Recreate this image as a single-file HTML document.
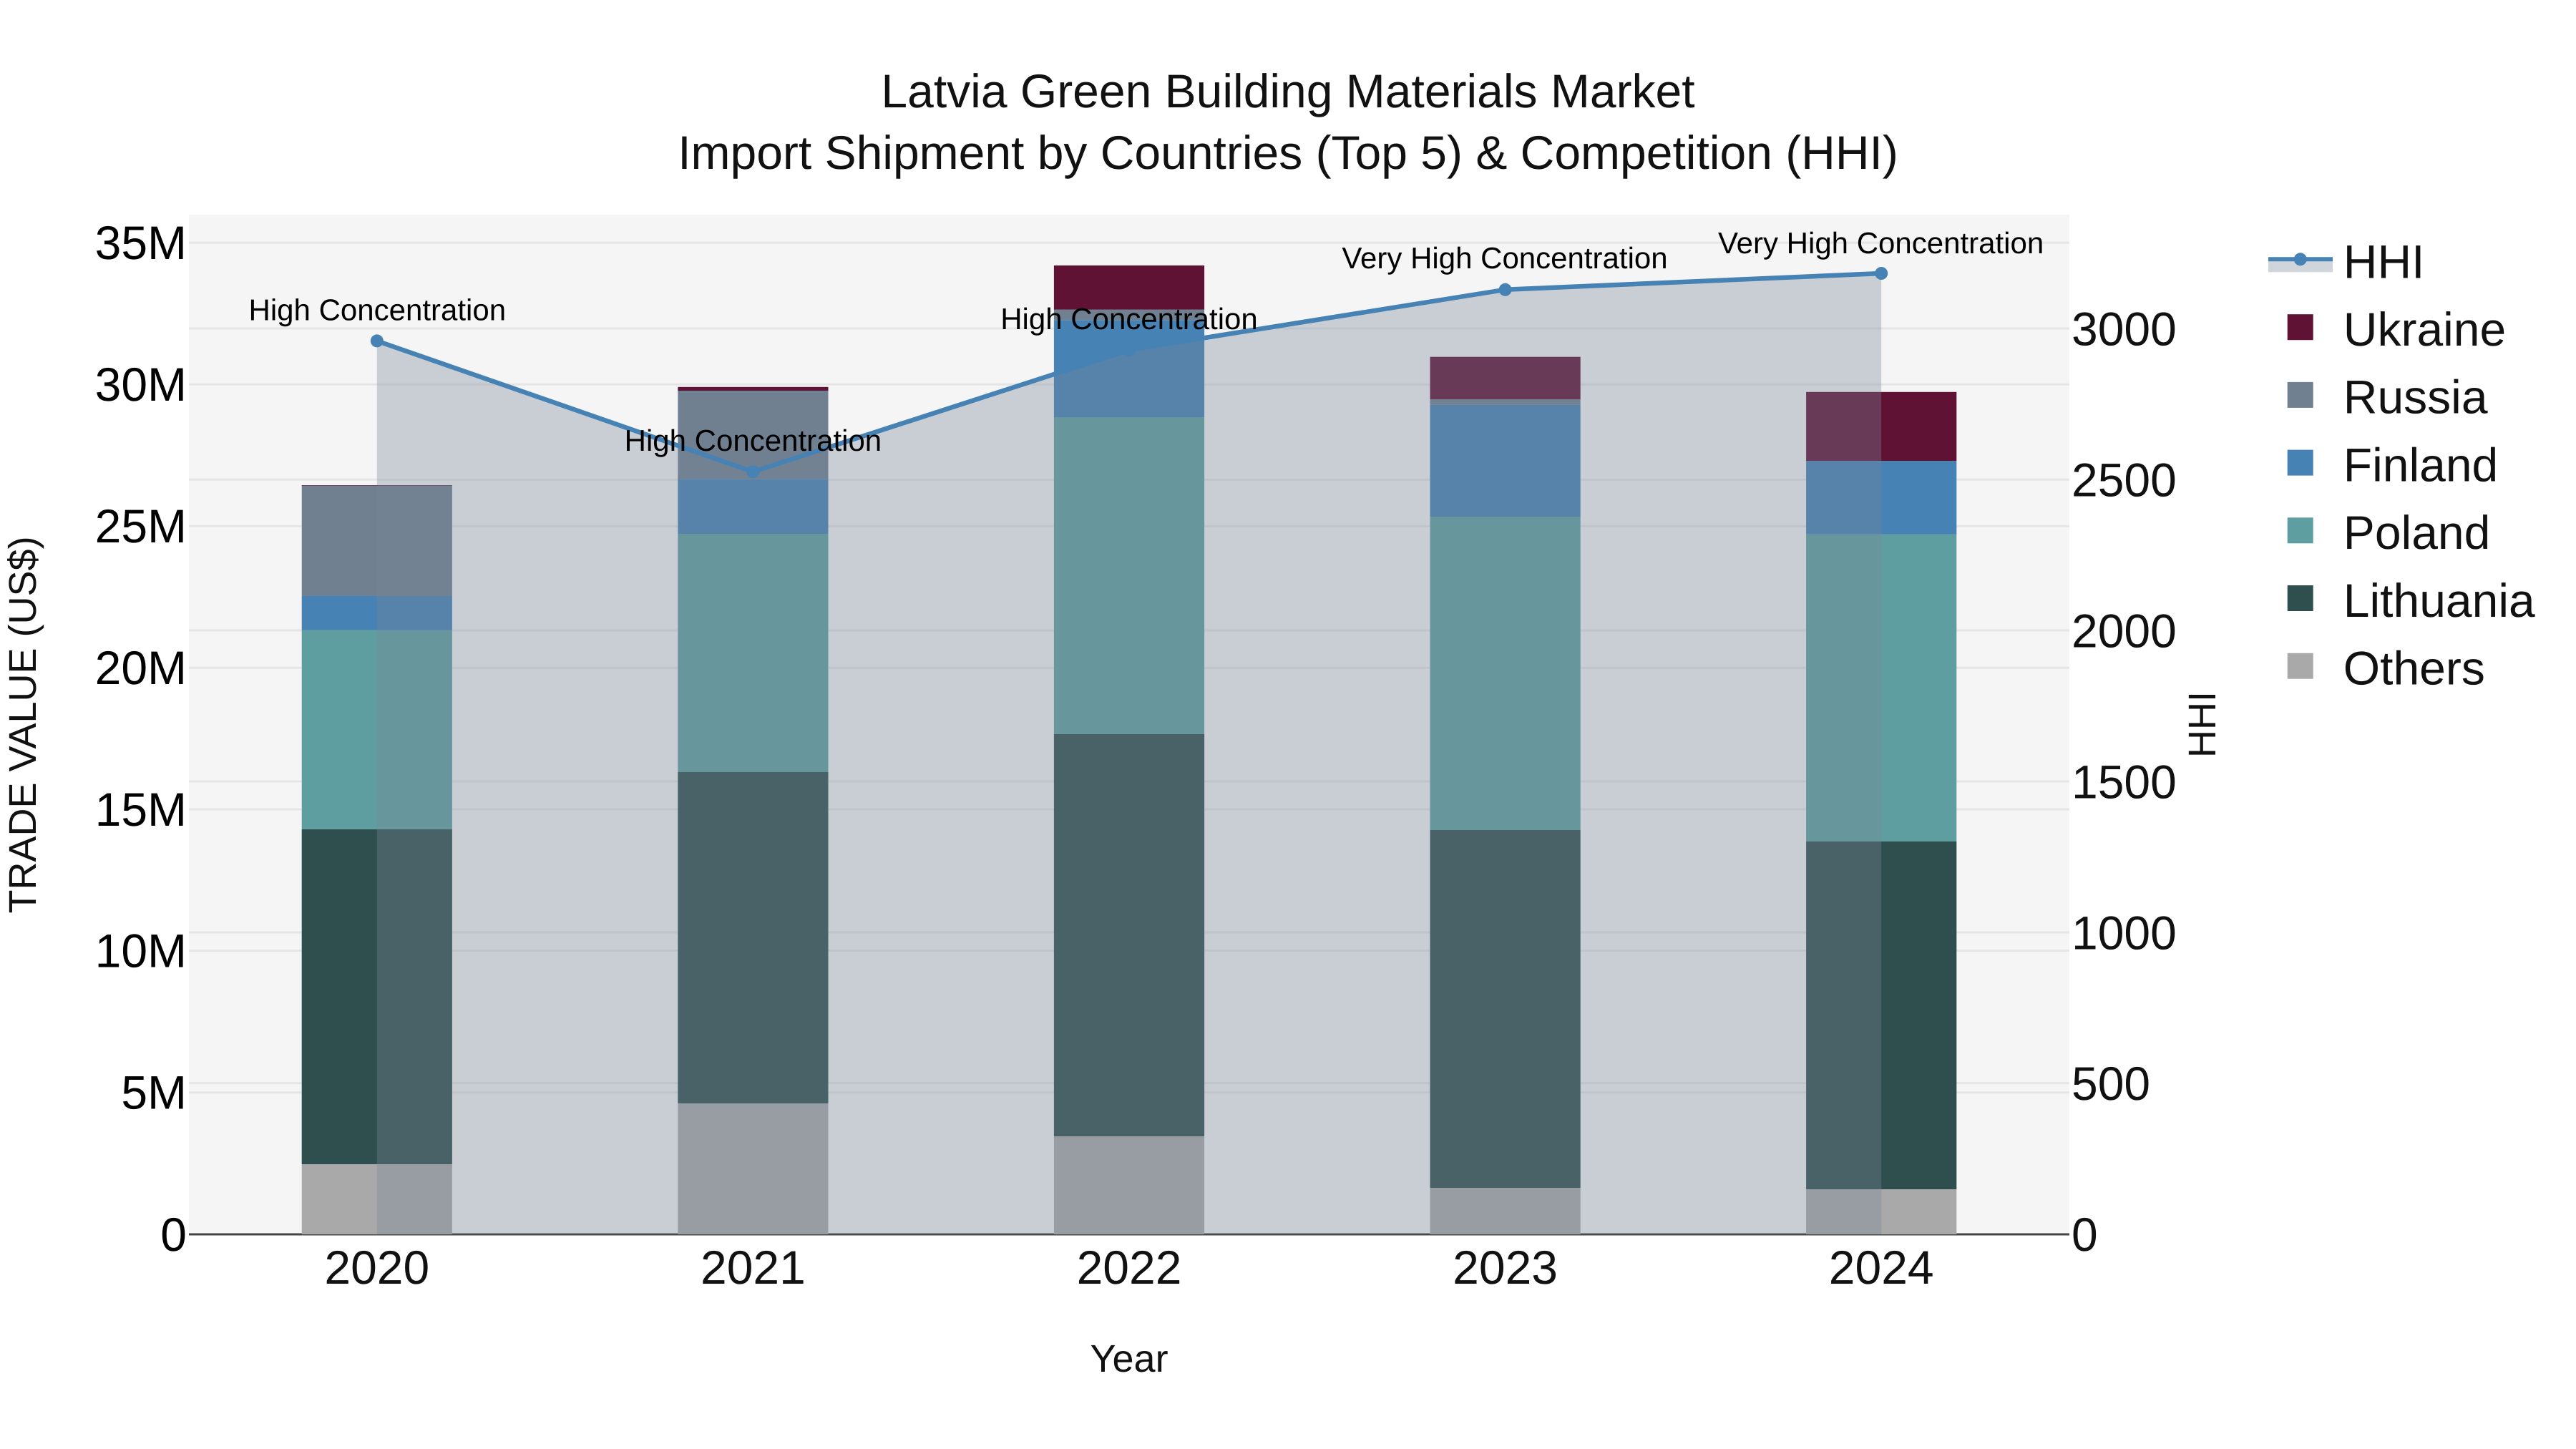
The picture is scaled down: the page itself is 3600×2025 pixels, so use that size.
<!DOCTYPE html>
<html>
<head>
<meta charset="utf-8">
<style>
html,body{margin:0;padding:0;background:#fff;width:3600px;height:2025px;overflow:hidden}
svg{display:block;font-family:"Liberation Sans",sans-serif;text-rendering:geometricPrecision}
</style>
</head>
<body>
<svg width="3600" height="2025" viewBox="0 0 3600 2025" xmlns="http://www.w3.org/2000/svg">
<rect width="3600" height="2025" fill="#fff"/>
<rect x="264" y="300" width="2628" height="1425" fill="#f5f5f5"/>
<g stroke="#e5e5e5" stroke-width="3" fill="none">
<path d="M264 339.3H2892M264 537.3H2892M264 735.3H2892M264 933.2H2892M264 1131H2892M264 1328.6H2892M264 1526.8H2892"/>
<path d="M264 459H2892M264 670.2H2892M264 881H2892M264 1092H2892M264 1303H2892M264 1513.6H2892"/>
</g>
<path d="M264 1725H2892" stroke="#444" stroke-width="3" fill="none"/>

<!-- Others -->
<g fill="#a9a9a9">
<rect x="421.7" y="1627" width="210.2" height="98"/>
<rect x="947.3" y="1542" width="210.2" height="183"/>
<rect x="1472.9" y="1588" width="210.2" height="137"/>
<rect x="1998.5" y="1660" width="210.2" height="65"/>
<rect x="2524.1" y="1662" width="210.2" height="63"/>
</g>
<!-- Lithuania -->
<g fill="#2f4f4f">
<rect x="421.7" y="1158.8" width="210.2" height="468.2"/>
<rect x="947.3" y="1079" width="210.2" height="463"/>
<rect x="1472.9" y="1026" width="210.2" height="562"/>
<rect x="1998.5" y="1160" width="210.2" height="500"/>
<rect x="2524.1" y="1176" width="210.2" height="486"/>
</g>
<!-- Poland -->
<g fill="#5f9ea0">
<rect x="421.7" y="880.7" width="210.2" height="278.1"/>
<rect x="947.3" y="746" width="210.2" height="333"/>
<rect x="1472.9" y="583" width="210.2" height="443"/>
<rect x="1998.5" y="722" width="210.2" height="438"/>
<rect x="2524.1" y="746.8" width="210.2" height="429.2"/>
</g>
<!-- Finland -->
<g fill="#4682b4">
<rect x="421.7" y="833" width="210.2" height="47.7"/>
<rect x="947.3" y="669.6" width="210.2" height="76.4"/>
<rect x="1472.9" y="447.3" width="210.2" height="135.7"/>
<rect x="1998.5" y="565.7" width="210.2" height="156.3"/>
<rect x="2524.1" y="644.5" width="210.2" height="102.3"/>
</g>
<!-- Russia -->
<g fill="#708090">
<rect x="421.7" y="678.7" width="210.2" height="154.3"/>
<rect x="947.3" y="546" width="210.2" height="123.6"/>
<rect x="1472.9" y="432.7" width="210.2" height="14.6"/>
<rect x="1998.5" y="558" width="210.2" height="7.7"/>
<rect x="2524.1" y="644" width="210.2" height="0.5"/>
</g>
<!-- Ukraine -->
<g fill="#601235">
<rect x="421.7" y="678" width="210.2" height="0.7"/>
<rect x="947.3" y="540.8" width="210.2" height="5.2"/>
<rect x="1472.9" y="371" width="210.2" height="61.7"/>
<rect x="1998.5" y="498.7" width="210.2" height="59.3"/>
<rect x="2524.1" y="547.8" width="210.2" height="96.2"/>
</g>

<!-- HHI -->
<path d="M526.8 476.4L1052.4 659.3L1578 489L2103.6 404.8L2629.2 382V1725H526.8Z" fill="rgb(119,135,152)" fill-opacity="0.35"/>
<path d="M526.8 476.4L1052.4 659.3L1578 489L2103.6 404.8L2629.2 382" fill="none" stroke="#4682b4" stroke-width="6.5" stroke-linejoin="round"/>
<g fill="#4682b4">
<circle cx="526.8" cy="476.4" r="9"/>
<circle cx="1052.4" cy="659.3" r="9"/>
<circle cx="1578" cy="489" r="9"/>
<circle cx="2103.6" cy="404.8" r="9"/>
<circle cx="2629.2" cy="382" r="9"/>
</g>

<!-- Point labels -->
<g font-size="42" fill="#000" text-anchor="middle">
<text x="527.3" y="447.5">High Concentration</text>
<text x="1052.4" y="630">High Concentration</text>
<text x="1578" y="460">High Concentration</text>
<text x="2103" y="375">Very High Concentration</text>
<text x="2628.6" y="354">Very High Concentration</text>
</g>

<!-- Title -->
<g font-size="66" fill="#111" text-anchor="middle">
<text x="1800" y="150">Latvia Green Building Materials Market</text>
<text x="1800" y="236">Import Shipment by Countries (Top 5) &amp; Competition (HHI)</text>
</g>

<!-- Left axis -->
<g font-size="66" fill="#000" text-anchor="end">
<text x="261" y="362.2">35M</text>
<text x="261" y="560.2">30M</text>
<text x="261" y="758.2">25M</text>
<text x="261" y="956.1">20M</text>
<text x="261" y="1153.9">15M</text>
<text x="261" y="1351.6">10M</text>
<text x="261" y="1549.7">5M</text>
<text x="261" y="1747.9">0</text>
</g>
<!-- Right axis -->
<g font-size="66" fill="#111">
<text x="2895" y="482.5">3000</text>
<text x="2895" y="693.5">2500</text>
<text x="2895" y="904.5">2000</text>
<text x="2895" y="1115.3">1500</text>
<text x="2895" y="1326.3">1000</text>
<text x="2895" y="1536.8">500</text>
<text x="2895" y="1748.1">0</text>
</g>
<!-- X axis -->
<g font-size="66" fill="#111" text-anchor="middle">
<text x="526.8" y="1794">2020</text>
<text x="1052.4" y="1794">2021</text>
<text x="1578" y="1794">2022</text>
<text x="2103.6" y="1794">2023</text>
<text x="2629.2" y="1794">2024</text>
</g>
<!-- Axis titles -->
<g font-size="54" fill="#111" text-anchor="middle">
<text x="1578" y="1917">Year</text>
<text transform="translate(50 1013) rotate(-90)">TRADE VALUE (US$)</text>
<text transform="translate(3096 1012.5) rotate(-90)">HHI</text>
</g>

<!-- Legend -->
<rect x="3170" y="362" width="90" height="18.3" fill="rgb(119,135,152)" fill-opacity="0.35"/>
<path d="M3170 362.3H3260" stroke="#4682b4" stroke-width="6" fill="none"/>
<circle cx="3214.7" cy="362.3" r="9" fill="#4682b4"/>
<rect x="3196.7" y="439.2" width="36" height="36" fill="#601235"/>
<rect x="3196.7" y="533.9" width="36" height="36" fill="#708090"/>
<rect x="3196.7" y="628.6" width="36" height="36" fill="#4682b4"/>
<rect x="3196.7" y="723.3" width="36" height="36" fill="#5f9ea0"/>
<rect x="3196.7" y="818" width="36" height="36" fill="#2f4f4f"/>
<rect x="3196.7" y="912.7" width="36" height="36" fill="#a9a9a9"/>
<g font-size="66" fill="#111">
<text x="3274.8" y="388.3">HHI</text>
<text x="3274.8" y="483">Ukraine</text>
<text x="3274.8" y="577.7">Russia</text>
<text x="3274.8" y="672.4">Finland</text>
<text x="3274.8" y="767.1">Poland</text>
<text x="3274.8" y="862">Lithuania</text>
<text x="3274.8" y="956.7">Others</text>
</g>
</svg>
</body>
</html>
